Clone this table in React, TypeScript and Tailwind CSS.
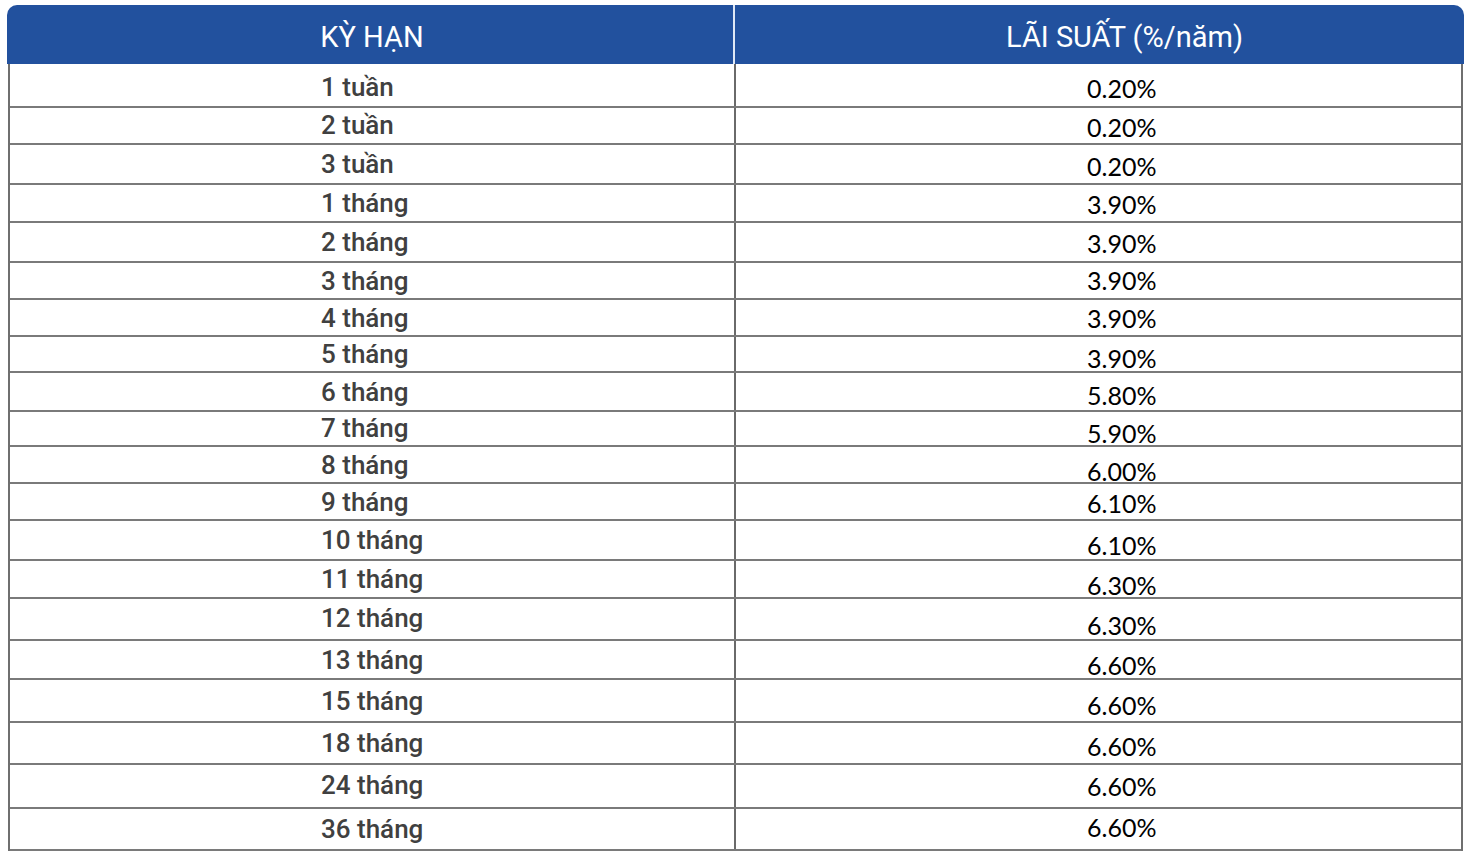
import React from "react";

type Row = { term: string; rate: string; h: string; off: string; loff: string };

const rows: Row[] = [
  { term: "1 tuần", rate: "0.20%", h: "h-[44px]", off: "translate-y-[3px]", loff: "translate-y-[2px]" },
  { term: "2 tuần", rate: "0.20%", h: "h-[37px]", off: "translate-y-[2px]", loff: "-translate-y-[1px]" },
  { term: "3 tuần", rate: "0.20%", h: "h-[40px]", off: "translate-y-[2px]", loff: "translate-y-[0px]" },
  { term: "1 tháng", rate: "3.90%", h: "h-[38px]", off: "translate-y-[1px]", loff: "translate-y-[0px]" },
  { term: "2 tháng", rate: "3.90%", h: "h-[40px]", off: "translate-y-[1px]", loff: "translate-y-[0px]" },
  { term: "3 tháng", rate: "3.90%", h: "h-[37px]", off: "translate-y-[0px]", loff: "translate-y-[0px]" },
  { term: "4 tháng", rate: "3.90%", h: "h-[37px]", off: "translate-y-[1px]", loff: "translate-y-[0px]" },
  { term: "5 tháng", rate: "3.90%", h: "h-[36px]", off: "translate-y-[4px]", loff: "translate-y-[0px]" },
  { term: "6 tháng", rate: "5.80%", h: "h-[39px]", off: "translate-y-[4px]", loff: "translate-y-[0px]" },
  { term: "7 tháng", rate: "5.90%", h: "h-[35px]", off: "translate-y-[5px]", loff: "-translate-y-[1px]" },
  { term: "8 tháng", rate: "6.00%", h: "h-[37px]", off: "translate-y-[7px]", loff: "translate-y-[0px]" },
  { term: "9 tháng", rate: "6.10%", h: "h-[37px]", off: "translate-y-[2px]", loff: "translate-y-[0px]" },
  { term: "10 tháng", rate: "6.10%", h: "h-[40px]", off: "translate-y-[5px]", loff: "translate-y-[0px]" },
  { term: "11 tháng", rate: "6.30%", h: "h-[38px]", off: "translate-y-[6px]", loff: "translate-y-[0px]" },
  { term: "12 tháng", rate: "6.30%", h: "h-[42px]", off: "translate-y-[6px]", loff: "-translate-y-[1px]" },
  { term: "13 tháng", rate: "6.60%", h: "h-[39px]", off: "translate-y-[6px]", loff: "translate-y-[0px]" },
  { term: "15 tháng", rate: "6.60%", h: "h-[43px]", off: "translate-y-[5px]", loff: "translate-y-[0px]" },
  { term: "18 tháng", rate: "6.60%", h: "h-[42px]", off: "translate-y-[3px]", loff: "translate-y-[0px]" },
  { term: "24 tháng", rate: "6.60%", h: "h-[44px]", off: "translate-y-[0px]", loff: "-translate-y-[1px]" },
  { term: "36 tháng", rate: "6.60%", h: "h-[42px]", off: "-translate-y-[2px]", loff: "translate-y-[0px]" },
];

export default function App() {
  return (
    <div className="w-[1472px] h-[860px] bg-white pt-[5px] pl-[7px]">
      <div className="w-[1457px]">
        {/* Header */}
        <div className="flex h-[59px] rounded-t-[10px] bg-[#22519e] text-white font-['Roboto',sans-serif] text-[29px] leading-none">
          <div className="w-[726px] flex items-center justify-center pt-[5px] pl-[4px]">
            <span>KỲ HẠN</span>
          </div>
          <div className="w-[2px] bg-[#dfe8f5]"></div>
          <div className="flex-1 flex items-center pl-[271px] pt-[5px]">
            <span>LÃI SUẤT (%/năm)</span>
          </div>
        </div>
        {/* Body */}
        <div className="ml-[1px] w-[1455px] border-l-2 border-r-2 border-[#6f6f6f]">
          {rows.map((r, i) => (
            <div
              key={i}
              className={`flex ${r.h} border-b-2 border-[#7a7a7a]`}
            >
              <div className="w-[724px] flex items-center pl-[311px] font-['Roboto',sans-serif] font-medium text-[26px] text-[#404040] leading-none">
                <span className={r.loff}>{r.term}</span>
              </div>
              <div className="w-[2px] bg-[#6a6a6a]"></div>
              <div className="flex-1 flex items-center pl-[351px] font-['Lato',sans-serif] text-[25px] text-black leading-none">
                <span className={r.off}>{r.rate}</span>
              </div>
            </div>
          ))}
        </div>
      </div>
    </div>
  );
}
